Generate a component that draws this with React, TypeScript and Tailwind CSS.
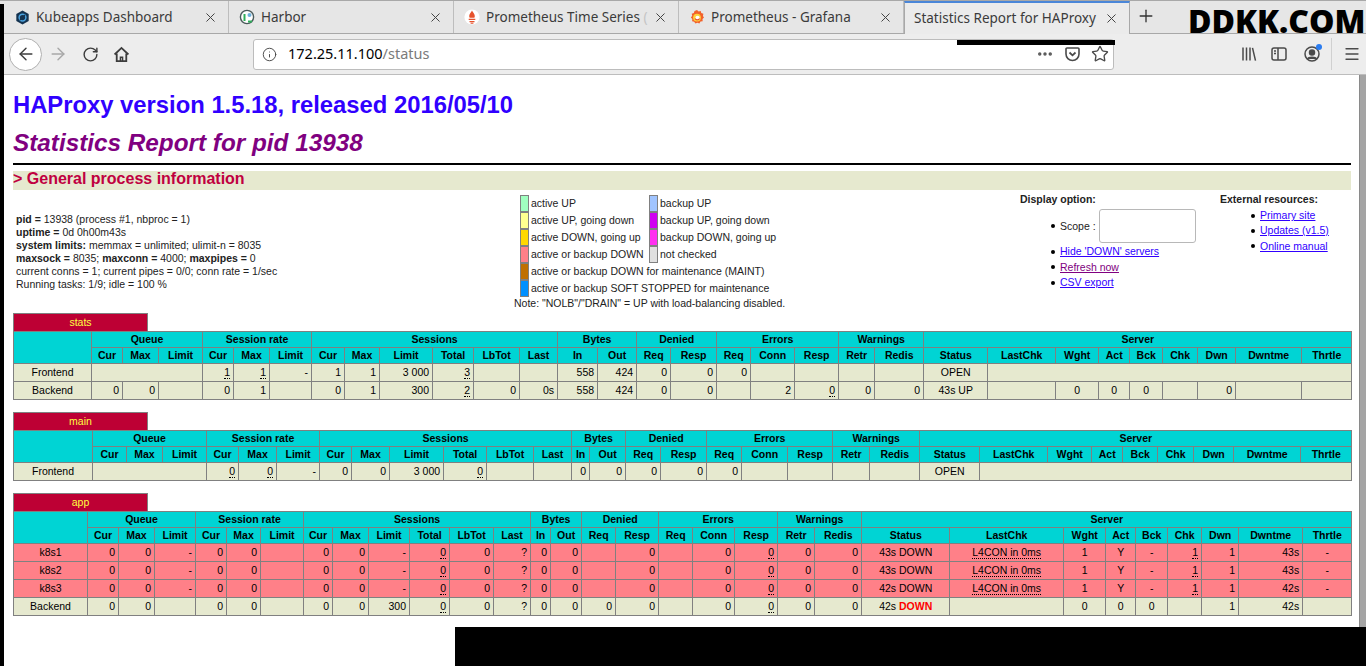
import { ReactNode } from "react";
import { ArrowLeft, ArrowRight, Ellipsis, Info, Menu, Plus, RotateCw, Star, X } from "lucide-react";

type Span = { span: number };
type Cell = string | Span | ReactNode;
type Row = { down?: boolean; cells: Cell[] };

const groups = [
  { name: "Queue", cols: ["Cur", "Max", "Limit"] },
  { name: "Session rate", cols: ["Cur", "Max", "Limit"] },
  { name: "Sessions", cols: ["Cur", "Max", "Limit", "Total", "LbTot", "Last"] },
  { name: "Bytes", cols: ["In", "Out"] },
  { name: "Denied", cols: ["Req", "Resp"] },
  { name: "Errors", cols: ["Req", "Conn", "Resp"] },
  { name: "Warnings", cols: ["Retr", "Redis"] },
  { name: "Server", cols: ["Status", "LastChk", "Wght", "Act", "Bck", "Chk", "Dwn", "Dwntme", "Thrtle"] },
];

// status, lastchk, wght, act, bck, thrtle and the name are centered
const centered = [0, 22, 23, 24, 25, 26, 30];

const statsEdges = [13, 91, 122, 158, 202, 233, 269, 311, 344, 379, 432, 473, 519, 557, 597, 636, 670, 716, 750, 794, 838, 874, 923, 987, 1055, 1098, 1129, 1162, 1197, 1235, 1301, 1351];
const mainEdges = [13, 92, 126, 162, 206, 238, 276, 319, 351, 389, 443, 486, 533, 571, 589, 625, 660, 706, 741, 787, 832, 869, 919, 979, 1047, 1091, 1122, 1157, 1193, 1233, 1300, 1351];
const appEdges = [13, 87, 118, 154, 195, 226, 260, 303, 332, 368, 409, 449, 493, 530, 550, 581, 615, 658, 692, 734, 777, 814, 861, 949, 1063, 1105, 1135, 1167, 1201, 1238, 1302, 1351];

const serverRow = (name: string, time: string, wait: string): Cell[] => [
  name, "0", "0", "-", "0", "0", "", "0", "0", "-", "~0", "0", "?", "0", "0", "", "0", "", "0", "~0", "0", "0",
  `${time} DOWN`, "~L4CON in 0ms", "1", "Y", "-", "~1", "1", wait, "-",
];

const statsRows: Row[] = [
  { cells: ["Frontend", { span: 3 }, "~1", "~1", "-", "1", "1", "3 000", "~3", "", "", "558", "424", "0", "0", "0", "", "", "", "", "OPEN", { span: 8 }] },
  { cells: ["Backend", "0", "0", "", "0", "1", "", "0", "1", "300", "~2", "0", "0s", "558", "424", "0", "0", "", "2", "~0", "0", "0", "43s UP", "", "0", "0", "0", "", "0", "", ""] },
];

const mainRows: Row[] = [
  { cells: ["Frontend", { span: 3 }, "~0", "~0", "-", "0", "0", "3 000", "~0", "", "", "0", "0", "0", "0", "0", "", "", "", "", "OPEN", { span: 8 }] },
];

const appRows: Row[] = [
  { down: true, cells: serverRow("k8s1", "43s", "43s") },
  { down: true, cells: serverRow("k8s2", "43s", "43s") },
  { down: true, cells: serverRow("k8s3", "42s", "42s") },
  {
    cells: [
      "Backend", "0", "0", "", "0", "0", "", "0", "0", "300", "~0", "0", "?", "0", "0", "0", "0", "", "0", "~0", "0", "0",
      <>42s <span className="font-bold text-[#ff0000]">DOWN</span></>,
      "", "0", "0", "0", "", "1", "42s", "",
    ],
  },
];

function isSpan(cell: Cell): cell is Span {
  return typeof cell === "object" && cell !== null && "span" in cell;
}

function ProxyTable({ title, edges, rows }: { title: string; edges: number[]; rows: Row[] }) {
  return (
    <div className="mb-[12px]">
      <div className="flex h-[18px] w-[135px] items-center justify-center border border-b-0 border-[#808080] bg-[#bd0034] text-[10.5px] text-[#ffff40]">
        {title}
      </div>
      <table className="w-[1338px] table-fixed border-collapse text-[10.5px] leading-none text-black">
        <colgroup>
          {edges.slice(1).map((edge, i) => (
            <col key={i} style={{ width: edge - edges[i] }} />
          ))}
        </colgroup>
        <thead>
          <tr className="h-[16px] bg-[#00d4d4]">
            <th rowSpan={2} className="border border-[#808080]" />
            {groups.map((g) => (
              <th key={g.name} colSpan={g.cols.length} className="border border-[#808080] p-0 font-bold">
                {g.name}
              </th>
            ))}
          </tr>
          <tr className="h-[16px] bg-[#00d4d4]">
            {groups.flatMap((g) =>
              g.cols.map((c) => (
                <th key={g.name + c} className="border border-[#808080] p-0 font-bold">
                  {c}
                </th>
              )),
            )}
          </tr>
        </thead>
        <tbody>
          {rows.map((row, r) => {
            let col = 0;
            return (
              <tr key={r} className={`h-[18px] ${row.down ? "bg-[#ff8088]" : "bg-[#e6e9cf]"}`}>
                {row.cells.map((cell, i) => {
                  const at = col;
                  if (isSpan(cell)) {
                    col += cell.span;
                    return <td key={i} colSpan={cell.span} className="border border-[#808080] p-0" />;
                  }
                  col += 1;
                  const align = centered.includes(at) ? "text-center" : "pr-[3px] text-right";
                  const marked = typeof cell === "string" && cell.startsWith("~");
                  return (
                    <td key={i} className={`border border-[#808080] p-0 whitespace-nowrap ${align}`}>
                      {marked ? <span className="border-b border-dotted border-black">{cell.slice(1)}</span> : cell}
                    </td>
                  );
                })}
              </tr>
            );
          })}
        </tbody>
      </table>
    </div>
  );
}

function Tab({ title, icon, active }: { title: ReactNode; icon?: ReactNode; active?: boolean }) {
  return (
    <div
      className={`flex shrink-0 items-center pr-[10px] ${
        active
          ? "-mb-px h-[34px] w-[226px] border-x border-t-2 border-[#a8a8a8] border-t-[#4a86d8] bg-[#ebebeb] pb-[2px] pl-[9px]"
          : "h-[32px] w-[225px] border-r border-r-[#bdbdbd] pl-[10px]"
      }`}
    >
      {icon && <span className="mr-[6px] flex h-[16px] w-[16px] shrink-0 items-center justify-center">{icon}</span>}
      <span className="min-w-0 flex-1 text-[13.5px] whitespace-nowrap text-[#3b3b3b]">{title}</span>
      <X size={15} strokeWidth={1.6} className="shrink-0 text-[#444]" />
    </div>
  );
}

function KubeIcon() {
  return (
    <svg viewBox="0 0 16 16" className="h-[15px] w-[15px]">
      <path d="M8 .5 14.6 4.2v7.6L8 15.5 1.4 11.8V4.2z" fill="#14324f" />
      <circle cx="8" cy="8" r="3.6" fill="none" stroke="#4aa3df" strokeWidth="1.6" />
      <path d="M5.4 10.6 10.6 5.4" stroke="#14324f" strokeWidth="1.6" />
    </svg>
  );
}

function HarborIcon() {
  return (
    <svg viewBox="0 0 16 16" className="h-[16px] w-[16px]">
      <circle cx="8" cy="8" r="6.6" fill="#fff" stroke="#4a5a5a" strokeWidth="1.4" />
      <path d="M5.5 5v7" stroke="#2fae5a" strokeWidth="2" />
      <circle cx="10.5" cy="6" r="2" fill="#6fb1dc" />
      <path d="M9 12.5h4" stroke="#2fae5a" strokeWidth="2" />
    </svg>
  );
}

function PrometheusIcon() {
  return (
    <svg viewBox="0 0 16 16" className="h-[16px] w-[16px]">
      <circle cx="8" cy="8" r="7.6" fill="#fff" />
      <path d="M8 1.5c.6 2 2.8 3 2.8 5.6 0 .6-.2 1.2-.5 1.7H5.7c-.3-.5-.5-1.1-.5-1.7C5.2 4.6 7.4 3.5 8 1.5z" fill="#e6522c" />
      <path d="M4.7 9.8h6.6v1.3H4.700zM5.5 12h5v1.200h-5zM6.600 13.800h2.800v.9H6.600z" fill="#e6522c" />
    </svg>
  );
}

function GrafanaIcon() {
  return (
    <svg viewBox="0 0 16 16" className="h-[16px] w-[16px]">
      <path d="M8 1l1.600 1.500 2.100-.5.600 2.100 2.100.7-.5 2.100L15 8.500l-1.500 1.500.2 2.200-2.200.4-1.100 1.900-2-.8-2 .8-1.200-1.800-2.100-.5.200-2.100L1.900 8.500 3.200 6.800l-.5-2.100 2.100-.7.700-2z" fill="#f2622b" />
      <circle cx="8" cy="8.600" r="3.900" fill="#ffd23a" />
      <circle cx="8.500" cy="9" r="2.200" fill="#fff" />
      <path d="M6 9.500a2.600 2.600 0 0 0 4.600 0" fill="none" stroke="#e8502a" strokeWidth="1.200" />
    </svg>
  );
}

function Legend({ color, label }: { color: string; label: string }) {
  return (
    <div className="flex h-[17px] items-center gap-[2px] whitespace-nowrap">
      <span className={`h-[17px] w-[9px] shrink-0 border border-[#808080] ${color}`} />
      <span>{label}</span>
    </div>
  );
}

function Bullet({ children, className }: { children: ReactNode; className?: string }) {
  return (
    <li className={`flex items-center ${className ?? ""}`}>
      <span className="mr-[5px] h-[4px] w-[4px] rounded-full bg-black" />
      {children}
    </li>
  );
}

function PageLink({ children, visited }: { children: ReactNode; visited?: boolean }) {
  return <span className={`underline ${visited ? "text-[#800080]" : "text-[#3000ff]"}`}>{children}</span>;
}

export default function App() {
  return (
    <div className="relative flex h-[666px] w-[1366px] flex-col overflow-hidden bg-white font-['Liberation_Sans',Arial,sans-serif]">
      {/* tab strip */}
      <div className="flex h-[34px] shrink-0 border-t border-b border-[#a8a8a8] bg-[#e6e6e6] pl-[4px] font-['Noto_Sans',sans-serif]">
        <Tab title="Kubeapps Dashboard" icon={<KubeIcon />} />
        <Tab title="Harbor" icon={<HarborIcon />} />
        <Tab title={<>Prometheus Time Series <span className="text-[#c4c4c4]">(</span></>} icon={<PrometheusIcon />} />
        <Tab title="Prometheus - Grafana" icon={<GrafanaIcon />} />
        <Tab title="Statistics Report for HAProxy" active />
        <Plus size={20} strokeWidth={1.6} className="mt-[5px] ml-[6px] text-[#333]" />
      </div>

      {/* nav bar */}
      <div className="flex h-[41px] shrink-0 items-center border-b border-[#bdbdbd] bg-[#ededed] pl-[9px] text-[#3c3c3c]">
        <div className="flex h-[33px] w-[33px] items-center justify-center rounded-full border border-[#b0b0b0] bg-white">
          <ArrowLeft size={20} strokeWidth={1.7} />
        </div>
        <ArrowRight size={20} strokeWidth={1.7} className="ml-[6px] text-[#a8a8a8]" />
        <RotateCw size={17} strokeWidth={2} className="ml-[14px]" />
        <svg viewBox="0 0 16 16" className="ml-[14px] h-[17px] w-[17px]" fill="none" stroke="currentColor" strokeWidth="1.7">
          <path d="M1.5 8 8 1.8 14.5 8" />
          <path d="M3.5 7v7.200h9V7" />
          <path d="M7 14v-3.500h2V14" strokeWidth="1.4" />
        </svg>
        <div className="ml-[123px] flex h-[31px] w-[861px] items-center rounded-[3px] border border-[#bcbcbc] bg-white font-['Noto_Sans',sans-serif]">
          <Info size={15} strokeWidth={1.5} className="ml-[8px] text-[#444]" />
          <span className="ml-[11px] text-[14.5px] text-black">172.25.11.100</span>
          <span className="text-[14.5px] text-[#7a7a7a]">/status</span>
          <Ellipsis size={18} strokeWidth={2.6} className="mr-[10px] ml-auto text-[#555]" />
          <svg viewBox="0 0 16 16" className="mr-[10px] h-[16px] w-[17px]" fill="none" stroke="#4a4a4a" strokeWidth="1.6">
            <path d="M2.500 2h11a1 1 0 0 1 1 1v5a6.500 6.500 0 0 1-13 0V3a1 1 0 0 1 1-1z" />
            <path d="M5 6.500 8 9.300 11 6.500" strokeWidth="1.8" />
          </svg>
          <Star size={18} strokeWidth={1.8} className="mr-[4px] text-[#4a4a4a]" />
        </div>
        <svg viewBox="0 0 16 16" className="ml-[127px] h-[16px] w-[16px]" fill="none" stroke="#4a4a4a" strokeWidth="1.5">
          <path d="M2 1.500v13M5.500 1.500v13M9 1.500v13M11.500 1.800l3 12.800" />
        </svg>
        <svg viewBox="0 0 16 16" className="ml-[14px] h-[16px] w-[16px]" fill="none" stroke="#4a4a4a" strokeWidth="1.5">
          <rect x="1" y="2" width="14" height="12" rx="2" />
          <path d="M7 2v12M3 5h2M3 7.500h2" />
        </svg>
        <div className="relative ml-[17px] h-[18px] w-[16px]">
          <svg viewBox="0 0 16 16" className="mt-[1px] h-[16px] w-[16px]" fill="none" stroke="#4a4a4a" strokeWidth="1.5">
            <circle cx="8" cy="8" r="7" />
            <circle cx="8" cy="6.500" r="2.500" fill="#4a4a4a" />
            <path d="M3.500 13c1-2.500 8-2.500 9 0" fill="#4a4a4a" />
          </svg>
          <span className="absolute -top-[1px] -right-[2px] h-[6px] w-[6px] rounded-full bg-[#2a7cf0]" />
        </div>
        <div className="ml-[11px] h-[32px] w-px bg-[#d0d0d0]" />
        <Menu size={18} strokeWidth={1.7} className="ml-[11px] text-[#4a4a4a]" />
      </div>

      {/* page */}
      <div className="flex min-h-0 flex-1">
        <div className="w-[1359px] shrink-0 pl-[13px] text-black">
          <div className="w-[1338px]">
            <h1 className="mt-[15px] h-[30px] text-[23.8px] leading-[30px] font-bold text-[#3000ff]">
              HAProxy version 1.5.18, released 2016/05/10
            </h1>
            <h2 className="mt-[8px] h-[30px] text-[24.3px] leading-[30px] font-bold text-[#800080] italic">
              Statistics Report for pid 13938
            </h2>
            <hr className="mt-[5px] h-[2px] border-0 bg-black" />
            <h3 className="mt-[6px] h-[19px] bg-[#e6e9cf] text-[16px] leading-[15px] font-bold text-[#c00040]">
              &gt; General process information
            </h3>
          </div>

          <div className="flex h-[123px] text-[10.5px] leading-[13px] text-[#222]">
            <div className="w-[507px] pt-[23px] pl-[3px]">
              <p><b>pid = </b>13938 (process #1, nbproc = 1)</p>
              <p><b>uptime = </b>0d 0h00m43s</p>
              <p><b>system limits:</b> memmax = unlimited; ulimit-n = 8035</p>
              <p><b>maxsock = </b>8035; <b>maxconn = </b>4000; <b>maxpipes = </b>0</p>
              <p>current conns = 1; current pipes = 0/0; conn rate = 1/sec</p>
              <p>Running tasks: 1/9; idle = 100 %</p>
            </div>

            <div className="w-[500px] pt-[5px]">
              <div className="flex">
                <div className="w-[129px]">
                  <Legend color="bg-[#a0ffc0]" label="active UP" />
                  <Legend color="bg-[#ffff90]" label="active UP, going down" />
                  <Legend color="bg-[#ffd800]" label="active DOWN, going up" />
                  <Legend color="bg-[#ff8088]" label="active or backup DOWN" />
                </div>
                <div>
                  <Legend color="bg-[#a0c4ff]" label="backup UP" />
                  <Legend color="bg-[#d000f0]" label="backup UP, going down" />
                  <Legend color="bg-[#ff30f0]" label="backup DOWN, going up" />
                  <Legend color="bg-[#e0e0e0]" label="not checked" />
                </div>
              </div>
              <Legend color="bg-[#c07000]" label="active or backup DOWN for maintenance (MAINT)" />
              <Legend color="bg-[#0090ff]" label="active or backup SOFT STOPPED for maintenance" />
              <p className="-ml-[6px] h-[13px] leading-[13px]">Note: "NOLB"/"DRAIN" = UP with load-balancing disabled.</p>
            </div>

            <div className="w-[200px] pt-[3px]">
              <p className="font-bold">Display option:</p>
              <ul className="mt-[3px] pl-[31px]">
                <Bullet className="h-[34px]">
                  <span className="mr-[3px]">Scope :</span>
                  <span className="h-[34px] w-[97px] rounded-[3px] border border-[#b8b8b8] bg-white" />
                </Bullet>
                <Bullet className="mt-[1px] h-[15px]"><PageLink>Hide 'DOWN' servers</PageLink></Bullet>
                <Bullet className="h-[16px]"><PageLink visited>Refresh now</PageLink></Bullet>
                <Bullet className="h-[15px]"><PageLink>CSV export</PageLink></Bullet>
              </ul>
            </div>

            <div className="pt-[3px]">
              <p className="font-bold">External resources:</p>
              <ul className="mt-[2px] pl-[31px]">
                <Bullet className="h-[15px]"><PageLink>Primary site</PageLink></Bullet>
                <Bullet className="h-[15px]"><PageLink>Updates (v1.5)</PageLink></Bullet>
                <Bullet className="h-[16px]"><PageLink>Online manual</PageLink></Bullet>
              </ul>
            </div>
          </div>

          <ProxyTable title="stats" edges={statsEdges} rows={statsRows} />
          <ProxyTable title="main" edges={mainEdges} rows={mainRows} />
          <ProxyTable title="app" edges={appEdges} rows={appRows} />
        </div>
        <div className="w-[7px] shrink-0 border-l border-[#8a8a8a] bg-[#a4a4a4]" />
      </div>

      {/* redaction bars and watermark sitting on top of the capture */}
      <div className="absolute top-[4px] bottom-0 left-0 w-[4px] bg-black" />
      <div className="absolute top-[40px] left-[957px] h-[5px] w-[158px] bg-black" />
      <div className="absolute top-[627px] right-0 bottom-0 left-[455px] bg-black" />
      <div className="absolute top-[3px] left-[1188px] font-['Open_Sans',sans-serif] text-[32px] leading-[36px] font-extrabold text-black">
        DDKK.COM
      </div>
    </div>
  );
}
